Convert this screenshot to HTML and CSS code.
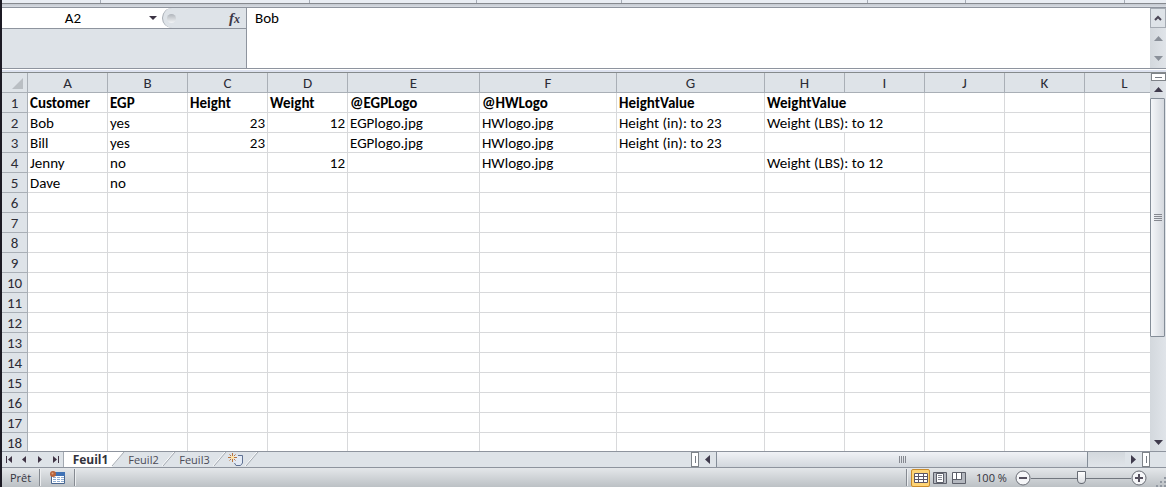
FILE: index.html
```html
<!DOCTYPE html>
<html lang="fr">
<head>
    <meta charset="utf-8">
    <title>Feuil1</title>
    <link rel="stylesheet" href="styles.css">
</head>
<body>

<div class="window">

    <div class="ribbon-edge">
        <span class="group"></span><span class="group"></span><span class="group"></span><span class="group"></span><span class="group"></span><span class="group"></span><span class="group"></span>
    </div>

    <!-- Name box and formula bar -->
    <div class="formula-bar">
        <div class="formula-left">
            <div class="formula-tools">
                <input class="name-box" type="text" value="A2" aria-label="Zone Nom">
                <button class="name-arrow" aria-label="Noms">
                    <svg width="8" height="4" viewBox="0 0 8 4"><path d="M0 0h8L4 4z" fill="#3b3344"/></svg>
                </button>
                <div class="fx-area">
                    <span class="knob"></span>
                    <button class="fx" aria-label="Insérer une fonction"><i>f</i><i class="fx-x">x</i></button>
                </div>
            </div>
        </div>
        <textarea class="formula-input" aria-label="Barre de formule">Bob</textarea>
        <div class="formula-scroll">
            <button class="collapse" aria-label="Réduire la barre de formule">
                <svg width="8" height="6" viewBox="0 0 8 6"><path d="M1 5l3-3 3 3" fill="none" stroke="#4a4555" stroke-width="2"/></svg>
            </button>
            <button class="line-btn" aria-label="Ligne précédente">
                <svg width="9" height="5" viewBox="0 0 9 5"><path d="M0 5h9L4.500 0z" fill="#8a9099"/></svg>
            </button>
            <button class="line-btn" aria-label="Ligne suivante">
                <svg width="9" height="5" viewBox="0 0 9 5"><path d="M0 0h9L4.500 5z" fill="#8a9099"/></svg>
            </button>
        </div>
    </div>
    <div class="divider"></div>

    <!-- Sheet -->
    <div class="sheet">
        <div class="cells">
            <table class="grid">
                <colgroup>
                    <col class="c-num"><col class="c-std"><col class="c-std"><col class="c-std"><col class="c-std">
                    <col class="c-e"><col class="c-f"><col class="c-g">
                    <col class="c-std"><col class="c-std"><col class="c-std"><col class="c-std"><col class="c-std">
                </colgroup>
                <thead>
                    <tr>
                        <th class="corner"><svg width="11" height="11" viewBox="0 0 11 11"><path d="M11 0v11H0z" fill="#b9bec3"/></svg></th>
                        <th>A</th><th>B</th><th>C</th><th>D</th><th>E</th><th>F</th><th>G</th><th>H</th><th>I</th><th>J</th><th>K</th><th>L</th>
                    </tr>
                </thead>
                <tbody>
                    <tr class="titles"><th>1</th><td>Customer</td><td>EGP</td><td>Height</td><td>Weight</td><td>@EGPLogo</td><td>@HWLogo</td><td>HeightValue</td><td colspan="2">WeightValue</td><td></td><td></td><td></td></tr>
                    <tr><th>2</th><td>Bob</td><td>yes</td><td class="num">23</td><td class="num">12</td><td>EGPlogo.jpg</td><td>HWlogo.jpg</td><td>Height (in): to 23</td><td colspan="2">Weight (LBS): to 12</td><td></td><td></td><td></td></tr>
                    <tr><th>3</th><td>Bill</td><td>yes</td><td class="num">23</td><td></td><td>EGPlogo.jpg</td><td>HWlogo.jpg</td><td>Height (in): to 23</td><td></td><td></td><td></td><td></td><td></td></tr>
                    <tr><th>4</th><td>Jenny</td><td>no</td><td></td><td class="num">12</td><td></td><td>HWlogo.jpg</td><td></td><td colspan="2">Weight (LBS): to 12</td><td></td><td></td><td></td></tr>
                    <tr><th>5</th><td>Dave</td><td>no</td><td></td><td></td><td></td><td></td><td></td><td></td><td></td><td></td><td></td><td></td></tr>
                    <tr><th>6</th><td></td><td></td><td></td><td></td><td></td><td></td><td></td><td></td><td></td><td></td><td></td><td></td></tr>
                    <tr><th>7</th><td></td><td></td><td></td><td></td><td></td><td></td><td></td><td></td><td></td><td></td><td></td><td></td></tr>
                    <tr><th>8</th><td></td><td></td><td></td><td></td><td></td><td></td><td></td><td></td><td></td><td></td><td></td><td></td></tr>
                    <tr><th>9</th><td></td><td></td><td></td><td></td><td></td><td></td><td></td><td></td><td></td><td></td><td></td><td></td></tr>
                    <tr><th>10</th><td></td><td></td><td></td><td></td><td></td><td></td><td></td><td></td><td></td><td></td><td></td><td></td></tr>
                    <tr><th>11</th><td></td><td></td><td></td><td></td><td></td><td></td><td></td><td></td><td></td><td></td><td></td><td></td></tr>
                    <tr><th>12</th><td></td><td></td><td></td><td></td><td></td><td></td><td></td><td></td><td></td><td></td><td></td><td></td></tr>
                    <tr><th>13</th><td></td><td></td><td></td><td></td><td></td><td></td><td></td><td></td><td></td><td></td><td></td><td></td></tr>
                    <tr><th>14</th><td></td><td></td><td></td><td></td><td></td><td></td><td></td><td></td><td></td><td></td><td></td><td></td></tr>
                    <tr><th>15</th><td></td><td></td><td></td><td></td><td></td><td></td><td></td><td></td><td></td><td></td><td></td><td></td></tr>
                    <tr><th>16</th><td></td><td></td><td></td><td></td><td></td><td></td><td></td><td></td><td></td><td></td><td></td><td></td></tr>
                    <tr><th>17</th><td></td><td></td><td></td><td></td><td></td><td></td><td></td><td></td><td></td><td></td><td></td><td></td></tr>
                    <tr><th>18</th><td></td><td></td><td></td><td></td><td></td><td></td><td></td><td></td><td></td><td></td><td></td><td></td></tr>
                </tbody>
            </table>
        </div>
        <div class="vscroll">
            <div class="split-top"></div>
            <button class="arrow" aria-label="Défiler vers le haut"><svg width="9" height="5" viewBox="0 0 9 5"><path d="M0 5h9L4.500 0z" fill="#3f3a4c"/></svg></button>
            <div class="vtrack"><div class="vthumb"><span></span><span></span><span></span><span></span></div></div>
            <button class="arrow" aria-label="Défiler vers le bas"><svg width="9" height="5" viewBox="0 0 9 5"><path d="M0 0h9L4.500 5z" fill="#3f3a4c"/></svg></button>
        </div>
    </div>

    <!-- Sheet tabs and horizontal scroll bar -->
    <div class="tab-row">
        <div class="tab-nav">
            <button aria-label="Première feuille"><svg width="7" height="7" viewBox="0 0 7 7"><path d="M0 0h1v7H0zM6 0v7L2 3.500z" fill="#3f3344"/></svg></button>
            <button aria-label="Feuille précédente"><svg width="7" height="7" viewBox="0 0 7 7"><path d="M5 0v7L1 3.500z" fill="#3f3344"/></svg></button>
            <button aria-label="Feuille suivante"><svg width="7" height="7" viewBox="0 0 7 7"><path d="M1 0v7l4-3.500z" fill="#3f3344"/></svg></button>
            <button aria-label="Dernière feuille"><svg width="7" height="7" viewBox="0 0 7 7"><path d="M6 0h1v7H6zM1 0v7l4-3.500z" fill="#3f3344"/></svg></button>
        </div>
        <div class="tabs">
            <button class="tab active">Feuil1</button>
            <svg class="slant" width="14" height="16" viewBox="0 0 14 16"><path d="M0 0h13L1 15H0z" fill="#fff"/><path d="M13 0L1 14" stroke="#a3a9b1"/></svg>
            <button class="tab">Feuil2</button>
            <svg class="slant" width="14" height="16" viewBox="0 0 14 16"><path d="M12 0L0 14" stroke="#fff"/><path d="M13 0L1 14" stroke="#a3a9b1"/></svg>
            <button class="tab">Feuil3</button>
            <svg class="slant" width="14" height="16" viewBox="0 0 14 16"><path d="M12 0L0 14" stroke="#fff"/><path d="M13 0L1 14" stroke="#a3a9b1"/></svg>
            <button class="new-sheet" aria-label="Insérer une feuille de calcul">
                <svg width="16" height="14" viewBox="0 0 16 14"><path d="M5 3h9v8l-2 2H8l-2-3z" fill="#e3eaf5"/><path d="M10 2.500h4.500V10l-2 2.500H8L6.500 10" fill="none" stroke="#5f7193"/><path d="M4.500 0v9M0 4.500h9M1.500 1.500l6 6M7.500 1.500l-6 6" stroke="#b8743c"/><path d="M3 3h3v3H3z" fill="#ffe0a0"/></svg>
            </button>
            <svg class="slant" width="14" height="16" viewBox="0 0 14 16"><path d="M12 0L0 14" stroke="#fff"/><path d="M13 0L1 14" stroke="#a3a9b1"/></svg>
        </div>
        <div class="hscroll">
            <div class="split-side"></div>
            <button class="side-arrow" aria-label="Défiler vers la gauche"><svg width="5" height="9" viewBox="0 0 5 9"><path d="M5 0v9L0 4.500z" fill="#3f3a4c"/></svg></button>
            <div class="htrack"><div class="hthumb"><span></span><span></span><span></span><span></span></div></div>
            <button class="side-arrow" aria-label="Défiler vers la droite"><svg width="5" height="9" viewBox="0 0 5 9"><path d="M0 0v9l5-4.500z" fill="#3f3a4c"/></svg></button>
            <div class="split-side"></div>
        </div>
        <div class="tab-corner"></div>
    </div>

    <!-- Status bar -->
    <div class="status">
        <span class="ready">Prêt</span>
        <span class="sep"></span>
        <button class="macro" aria-label="Enregistrer une macro">
            <svg width="16" height="14" viewBox="0 0 16 14"><path d="M1.500 2.500h13v10h-13z" fill="#fff" stroke="#47658f"/><path d="M2 1h13v4H2z" fill="#3f72b5"/><path d="M3 6.500h3M7 6.500h3M11 6.500h3M3 8.500h3M7 8.500h3M11 8.500h3M3 10.500h3M7 10.500h3M11 10.500h3" stroke="#8fadd3"/><circle cx="3" cy="3" r="3" fill="#b8643c"/><circle cx="2.500" cy="2.500" r="1" fill="#e0a27c"/></svg>
        </button>
        <span class="sep"></span>
        <span class="spacer"></span>
        <span class="sep"></span>
        <div class="views">
            <button class="view on" aria-label="Normal"><svg width="14" height="12" viewBox="0 0 14 12"><path d="M1 1h12v10H1z" fill="#fff"/><path d="M.5 1.500h13v9H.5zM0 4.500h14M0 7.500h14M4.500 1v10M9.500 1v10" fill="none" stroke="#5c5666"/></svg></button>
            <button class="view" aria-label="Mise en page"><svg width="14" height="12" viewBox="0 0 14 12"><path d="M.5.5h13v11H.5z" fill="#b4b8bf" stroke="#5c5f69"/><path d="M3.500 1.500h7v9h-7z" fill="#fff" stroke="#5c5f69"/><path d="M5 3.500h4M5 5.500h4M5 7.500h4" stroke="#858993"/></svg></button>
            <button class="view" aria-label="Aperçu des sauts de page"><svg width="14" height="12" viewBox="0 0 14 12"><path d="M.5.5h13v11H.5z" fill="#b4b8bf" stroke="#5c5f69"/><path d="M1 1h3v6H1zM5 1h4v6H5z" fill="#fff"/><path d="M4.500 1v6M9.500 1v6.500H1" fill="none" stroke="#5c5f69"/></svg></button>
        </div>
        <button class="percent">100 %</button>
        <div class="zoom">
            <button class="round" aria-label="Zoom arrière"><svg width="16" height="16" viewBox="0 0 16 16"><circle cx="8" cy="8" r="7" fill="#f5f6f8" stroke="#6a6e76"/><path d="M4 8h8" stroke="#55505e" stroke-width="2"/></svg></button>
            <input class="slider" type="range" min="0" max="100" value="50" aria-label="Zoom">
            <button class="round" aria-label="Zoom avant"><svg width="16" height="16" viewBox="0 0 16 16"><circle cx="8" cy="8" r="7" fill="#f5f6f8" stroke="#6a6e76"/><path d="M4 8h8M8 4v8" stroke="#55505e" stroke-width="2"/></svg></button>
        </div>
        <svg class="grip" width="10" height="10" viewBox="0 0 10 10"><path d="M8 0h2v2H8zM4 4h2v2H4zM8 4h2v2H8zM0 8h2v2H0zM4 8h2v2H4zM8 8h2v2H8z" fill="#9299a2"/></svg>
    </div>

</div>

</body>
</html>
```

FILE: styles.css
```css
* {
    box-sizing: border-box;
}

body {
    margin: 0;
    font-family: "Carlito", "Lato", sans-serif;
    font-size: 15px;
    color: #000;
    background-color: #dee3e8;
}

button {
    margin: 0;
    padding: 0;
    border: none;
    background: none;
    font-family: inherit;
    color: inherit;
    display: flex;
    align-items: center;
    justify-content: center;
}

svg {
    display: block;
    flex: none;
}

.window {
    height: 100vh;
    display: flex;
    flex-direction: column;
    border-left: 2px solid #1c1a24;
    box-shadow: inset 1px 0 #a8adb5;
    overflow: hidden;
}

/* Bottom edge of the ribbon */
.ribbon-edge {
    flex: none;
    height: 8px;
    display: grid;
    grid-template-columns: 99fr 209fr 167fr 144fr 246fr 98fr 159fr 41fr;
    background: linear-gradient(#e9edf3 3px, #86898e 3px, #86898e 4px, #c3c8d0 4px, #d8dce2 7px, #8e949e 7px);
}

.group {
    height: 3px;
    border-right: 1px solid #a5abb5;
}

/* Formula bar */
.formula-bar {
    flex: none;
    height: 61px;
    display: flex;
    border-bottom: 1px solid #8e949e;
    background-color: #dee3e8;
}

.formula-left {
    width: 245px;
    border-right: 1px solid #8e949e;
}

.formula-tools {
    display: flex;
    height: 21px;
    border-bottom: 1px solid #8e949e;
    background-color: #fff;
}

.name-box {
    width: 142px;
    padding: 0;
    border: none;
    background: none;
    font-family: inherit;
    font-size: 15px;
    text-align: center;
}

.name-arrow {
    width: 18px;
}

.fx-area {
    flex: 1;
    display: flex;
    align-items: center;
    justify-content: space-between;
    padding: 0 6px 0 4px;
    border-left: 1px solid #a5abb3;
    border-radius: 10px 0 0 10px;
    background-color: #dee3e8;
}

.knob {
    width: 9px;
    height: 9px;
    border-radius: 50%;
    background: linear-gradient(#b0b5bb, #f2f4f6);
}

.fx {
    font-family: "Liberation Serif", serif;
    font-size: 15px;
    font-weight: bold;
    color: #3b3847;
}

.fx-x {
    padding-top: 3px;
    font-size: 12px;
}

.formula-input {
    flex: 1;
    padding: 2px 8px;
    border: none;
    resize: none;
    font-family: inherit;
    font-size: 15px;
    line-height: 17px;
    background-color: #fff;
}

.formula-scroll {
    width: 16px;
    display: flex;
    flex-direction: column;
    background: linear-gradient(to right, #d3d8dd, #e0e4e9);
}

.collapse {
    height: 20px;
    border: 1px solid #a5abb3;
    background-color: #dee3e8;
}

.line-btn {
    flex: 1;
}

.divider {
    flex: none;
    height: 4px;
    border-bottom: 1px solid #858a8c;
    background: linear-gradient(#fff 1px, #dde2ef 1px);
}

/* Sheet */
.sheet {
    flex: 1;
    min-height: 0;
    display: flex;
}

.cells {
    flex: 1;
    min-width: 0;
    overflow: hidden;
    background-color: #fff;
}

.grid {
    width: 1163px;
    table-layout: fixed;
    border-collapse: separate;
    border-spacing: 0;
    line-height: 17px;
}

.c-num { width: 26px; }
.c-std { width: 80px; }
.c-e { width: 132px; }
.c-f { width: 137px; }
.c-g { width: 148px; }

.grid th,
.grid td {
    height: 20px;
    padding: 2px 2px 0;
    border-right: 1px solid #d8d9db;
    border-bottom: 1px solid #d8d9db;
    text-align: left;
    white-space: nowrap;
}

.grid th {
    padding: 2px 0 0;
    border-color: #a9afb6;
    background-color: #dee3e8;
    font-weight: normal;
    text-align: center;
    color: #2c2c36;
}

.grid .corner svg {
    margin-left: 10px;
}

.grid .titles td {
    font-weight: bold;
}

.grid .num {
    text-align: right;
}

.vscroll {
    width: 16px;
    display: flex;
    flex-direction: column;
    background: linear-gradient(to right, #d3d8dd, #e0e4e9);
}

.split-top {
    height: 8px;
    margin-left: 1px;
    padding: 2px;
    border: 1px solid #7f8489;
    background: linear-gradient(#777c84, #777c84) center / 7px 1px no-repeat #fff;
}

.arrow {
    height: 17px;
}

.vtrack {
    flex: 1;
}

.vthumb {
    width: 15px;
    height: 71%;
    display: flex;
    flex-direction: column;
    align-items: center;
    justify-content: center;
    gap: 1px;
    border: 1px solid #848d98;
    border-radius: 1px;
    background: linear-gradient(to right, #f4f6f9, #d5d9df);
}

.vthumb span {
    width: 8px;
    height: 1px;
    background-color: #858890;
}

/* Tabs */
.tab-row {
    flex: none;
    height: 17px;
    display: flex;
    border-top: 1px solid #8e949e;
    border-bottom: 1px solid #8e949e;
    background-color: #dee3e8;
    font-family: "Open Sans", sans-serif;
}

.tab-nav {
    width: 62px;
    display: flex;
    justify-content: space-around;
    border-right: 1px solid #a3a9b1;
}

.tabs {
    flex: 1;
    display: flex;
}

.tab {
    width: 37px;
    font-size: 11px;
    color: #4b4b57;
}

.tab.active {
    width: 47px;
    padding-left: 6px;
    background-color: #fff;
    font-size: 12px;
    font-weight: bold;
    color: #33333d;
}

.new-sheet {
    width: 18px;
}

.hscroll {
    width: 459px;
    display: flex;
}

.split-side {
    width: 8px;
    border: 1px solid #7f8489;
    background: linear-gradient(#777c84, #777c84) center / 1px 7px no-repeat #fff;
}

.side-arrow {
    width: 17px;
}

.htrack {
    flex: 1;
    background: linear-gradient(#d3d8dd, #e0e4e9);
}

.hthumb {
    width: 91%;
    height: 100%;
    display: flex;
    align-items: center;
    justify-content: center;
    gap: 1px;
    border: 1px solid #848d98;
    border-width: 0 1px;
    background: linear-gradient(#f0f2f6, #d2d7dd);
}

.hthumb span {
    width: 1px;
    height: 7px;
    background-color: #858890;
}

.tab-corner {
    width: 16px;
}

/* Status bar */
.status {
    flex: none;
    height: 19px;
    display: flex;
    align-items: center;
    background: linear-gradient(#e4e7ea, #bcc1c5);
    font-family: "Open Sans", sans-serif;
    font-size: 11px;
    color: #33333d;
}

.ready {
    width: 37px;
    padding-left: 8px;
}

.sep {
    width: 2px;
    height: 17px;
    border-left: 1px solid #858a91;
    border-right: 1px solid #eceef0;
}

.macro {
    width: 33px;
}

.spacer {
    flex: 1;
}

.views {
    display: flex;
    padding-left: 3px;
}

.view {
    width: 19px;
    height: 18px;
}

.view.on {
    border: 1px solid #c98b2b;
    border-radius: 2px;
    background-color: #ffd475;
}

.percent {
    width: 47px;
    font-size: 11px;
}

.zoom {
    display: flex;
    align-items: center;
}

.slider {
    width: 100px;
    height: 16px;
    margin: 0;
    appearance: none;
    background: linear-gradient(transparent 8px, #72777f 8px, #72777f 9px, transparent 9px);
}

.slider::-webkit-slider-thumb {
    appearance: none;
    width: 9px;
    height: 13px;
    background: linear-gradient(#fff, #dadde1);
    border: 1px solid #666b73;
    border-radius: 1px 1px 5px 5px;
}

.grip {
    margin: 8px 0 0 9px;
}
```
